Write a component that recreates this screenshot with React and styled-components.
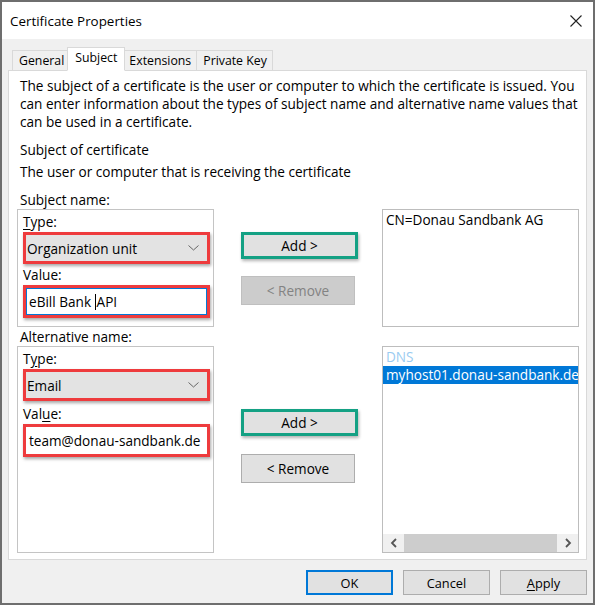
import React from 'react'
import styled, { createGlobalStyle } from 'styled-components'

const GlobalStyle = createGlobalStyle`
  html, body {
    margin: 0;
    padding: 0;
    background: #fff;
  }
  body {
    font-family: "Open Sans", "Noto Sans", sans-serif;
    font-size: 13.6px;
    color: #000;
  }
`

const App = () => {
  return (
    <>
      <GlobalStyle />
      <Window>
        <TitleBar>
          <Title>Certificate Properties</Title>
          <svg width="12" height="12" viewBox="0 0 12 12">
            <path d="M0.5 0.5 L11.5 11.5 M11.5 0.5 L0.5 11.5" stroke="#222" strokeWidth="1.1" fill="none" />
          </svg>
        </TitleBar>
        <Body>
          <TabRow>
            <Tab>General</Tab>
            <Tab $active>Subject</Tab>
            <Tab>Extensions</Tab>
            <Tab>Private Key</Tab>
          </TabRow>
          <Panel>
            <Intro>
              The subject of a certificate is the user or computer to which the certificate is issued. You<br />
              can enter information about the types of subject name and alternative name values that<br />
              can be used in a certificate.
            </Intro>
            <Caption $top={10}>Subject of certificate</Caption>
            <Caption $top={4}>The user or computer that is receiving the certificate</Caption>

            <Section $top={9}>
              <SectionLabel>Subject name:</SectionLabel>
              <GroupBox $pad={8}>
                <FieldLabel><Key>T</Key>ype:</FieldLabel>
                <RedFrame>
                  <Combo>
                    Organization unit
                    <Chevron />
                  </Combo>
                </RedFrame>
                <FieldLabel $top={2}>Value:</FieldLabel>
                <RedFrame>
                  <TextInput $focused>
                    eBill Bank <Caret />API
                  </TextInput>
                </RedFrame>
              </GroupBox>
              <ButtonStack $top={23}>
                <GreenFrame>
                  <PushButton $flat>Add &gt;</PushButton>
                </GreenFrame>
                <PushButton $disabled $gap={17}>&lt; Remove</PushButton>
              </ButtonStack>
              <ListBox>
                <ListItems>
                  <Item>CN=Donau Sandbank AG</Item>
                </ListItems>
              </ListBox>
            </Section>

            <Section $grow>
              <SectionLabel>Alternative name:</SectionLabel>
              <GroupBox $pad={8}>
                <FieldLabel>T<Key>y</Key>pe:</FieldLabel>
                <RedFrame>
                  <Combo>
                    Email
                    <Chevron />
                  </Combo>
                </RedFrame>
                <FieldLabel $top={4}>Val<Key>u</Key>e:</FieldLabel>
                <RedFrame>
                  <TextInput>team@donau-sandbank.de</TextInput>
                </RedFrame>
              </GroupBox>
              <ButtonStack $top={63}>
                <GreenFrame>
                  <PushButton $flat>Add &gt;</PushButton>
                </GreenFrame>
                <PushButton $gap={18}>&lt; Remove</PushButton>
              </ButtonStack>
              <ListBox>
                <ListItems>
                  <Item $muted>DNS</Item>
                  <Item $selected>myhost01.donau-sandbank.de</Item>
                </ListItems>
                <HScroll>
                  <Arrow>
                    <svg width="8" height="10" viewBox="0 0 8 10">
                      <path d="M6 1 L2 5 L6 9" stroke="#555" strokeWidth="1.8" fill="none" />
                    </svg>
                  </Arrow>
                  <Thumb />
                  <Arrow>
                    <svg width="8" height="10" viewBox="0 0 8 10">
                      <path d="M2 1 L6 5 L2 9" stroke="#555" strokeWidth="1.8" fill="none" />
                    </svg>
                  </Arrow>
                </HScroll>
              </ListBox>
            </Section>
          </Panel>
          <Footer>
            <DialogButton $default>OK</DialogButton>
            <DialogButton>Cancel</DialogButton>
            <DialogButton><Key>A</Key>pply</DialogButton>
          </Footer>
        </Body>
      </Window>
    </>
  )
}

const Chevron = () => (
  <ChevronIcon width="11" height="6" viewBox="0 0 11 6">
    <path d="M0.5 0.5 L5.5 5 L10.5 0.5" stroke="#666" strokeWidth="1" fill="none" />
  </ChevronIcon>
)

const Window = styled.div`
  width: 595px;
  height: 605px;
  box-sizing: border-box;
  border: 2px solid #6e6e6e;
  background: #f0f0f0;
  display: flex;
  flex-direction: column;
`
const TitleBar = styled.div`
  height: 37px;
  flex: none;
  background: #fff;
  display: flex;
  align-items: center;
  justify-content: space-between;
  padding: 0 11px 0 8px;
`
const Title = styled.span`
  font-size: 13.4px;
`
const Body = styled.div`
  flex: 1;
  display: flex;
  flex-direction: column;
  padding: 8px 6px 8px 6px;
  min-height: 0;
`
const TabRow = styled.div`
  display: flex;
  align-items: flex-end;
  height: 24px;
  padding-left: 5px;
  margin-bottom: -1px;
  position: relative;
  z-index: 1;
  font-size: 12.3px;
`
const Tab = styled.div`
  box-sizing: border-box;
  height: ${p => (p.$active ? '24px' : '21px')};
  padding: ${p => (p.$active ? '0 7px' : '0 5px 0 6px')};
  margin: ${p => (p.$active ? '0 -2px 0 -3px' : '0 0 0 -1px')};
  background: ${p => (p.$active ? '#fff' : '#f0f0f0')};
  border: 1px solid #d9d9d9;
  border-bottom: ${p => (p.$active ? '1px solid #fff' : '1px solid #d9d9d9')};
  line-height: 19px;
  position: relative;
  z-index: ${p => (p.$active ? 2 : 1)};
  white-space: nowrap;
`
const Panel = styled.div`
  flex: 1;
  display: flex;
  flex-direction: column;
  background: #fff;
  border: 1px solid #d9d9d9;
  padding: 6px 7px 6px 8px;
  min-height: 0;
`
const Intro = styled.p`
  margin: 0;
  padding-left: 3px;
  line-height: 18px;
  white-space: nowrap;
`
const Caption = styled.div`
  margin-top: ${p => p.$top}px;
  padding-left: 3px;
  line-height: 18px;
`
const Section = styled.div`
  margin-top: ${p => p.$top || 0}px;
  display: grid;
  grid-template-columns: 197px 1fr 197px;
  grid-template-rows: auto ${p => (p.$grow ? '1fr' : 'auto')};
  flex: ${p => (p.$grow ? 1 : 'none')};
`
const SectionLabel = styled.div`
  grid-column: 1 / 4;
  padding-left: 3px;
  line-height: 19px;
`
const GroupBox = styled.div`
  border: 1px solid #c4c4c4;
  padding: 3px 3px ${p => p.$pad}px 5px;
  display: flex;
  flex-direction: column;
`
const FieldLabel = styled.div`
  margin-top: ${p => p.$top || 0}px;
  line-height: 17px;
  margin-bottom: 2px;
`
const Key = styled.u`
  text-underline-offset: 2px;
`
const RedFrame = styled.div`
  border: 3px solid #ee3b3d;
  box-shadow: 1px 2px 3px rgba(0, 0, 0, 0.35);
`
const Combo = styled.div`
  height: 26px;
  box-sizing: border-box;
  background: #e3e3e3;
  display: flex;
  align-items: center;
  justify-content: space-between;
  padding: 0 8px 0 1px;
`
const ChevronIcon = styled.svg`
  display: block;
`
const TextInput = styled.div`
  height: 27px;
  box-sizing: border-box;
  background: #fff;
  border: 1px solid ${p => (p.$focused ? '#0078d7' : '#fff')};
  display: flex;
  align-items: center;
  padding: 0 2px;
  white-space: pre;
`
const Caret = styled.span`
  display: inline-block;
  width: 1px;
  height: 16px;
  background: #000;
  margin-right: 1px;
`
const ButtonStack = styled.div`
  padding: ${p => p.$top}px 0 0 27px;
  display: flex;
  flex-direction: column;
  align-items: flex-start;
`
const GreenFrame = styled.div`
  width: 117px;
  box-sizing: border-box;
  border: 3px solid #14a184;
  box-shadow: 1px 2px 3px rgba(0, 0, 0, 0.3);
`
const PushButton = styled.div`
  box-sizing: border-box;
  width: ${p => (p.$flat ? '100%' : '114px')};
  height: ${p => (p.$flat ? '21px' : '29px')};
  margin-top: ${p => p.$gap || 0}px;
  background: ${p => (p.$disabled ? '#cccccc' : '#e1e1e1')};
  border: ${p => (p.$flat ? 'none' : `1px solid ${p.$disabled ? '#bfbfbf' : '#adadad'}`)};
  color: ${p => (p.$disabled ? '#838383' : '#000')};
  display: flex;
  align-items: center;
  justify-content: center;
`
const ListBox = styled.div`
  border: 1px solid #bdbdbd;
  display: flex;
  flex-direction: column;
  background: #fff;
  min-height: 0;
  min-width: 0;
`
const ListItems = styled.div`
  flex: 1;
  padding-top: 1px;
`
const Item = styled.div`
  line-height: 18px;
  padding-left: 3px;
  white-space: nowrap;
  overflow: hidden;
  color: ${p => (p.$selected ? '#fff' : p.$muted ? '#9acbf1' : '#000')};
  background: ${p => (p.$selected ? '#0078d7' : 'transparent')};
`
const HScroll = styled.div`
  height: 18px;
  display: flex;
  align-items: stretch;
  background: #f0f0f0;
`
const Arrow = styled.div`
  width: 21px;
  display: flex;
  align-items: center;
  justify-content: center;
`
const Thumb = styled.div`
  flex: 1;
  background: #cdcdcd;
`
const Footer = styled.div`
  display: flex;
  justify-content: flex-end;
  gap: 10px;
  margin-top: 10px;
`
const DialogButton = styled.div`
  width: 87px;
  height: 25px;
  box-sizing: border-box;
  background: #e1e1e1;
  border: ${p => (p.$default ? '2px solid #0078d7' : '1px solid #adadad')};
  display: flex;
  align-items: center;
  justify-content: center;
  font-size: 12.8px;
`

export default App
